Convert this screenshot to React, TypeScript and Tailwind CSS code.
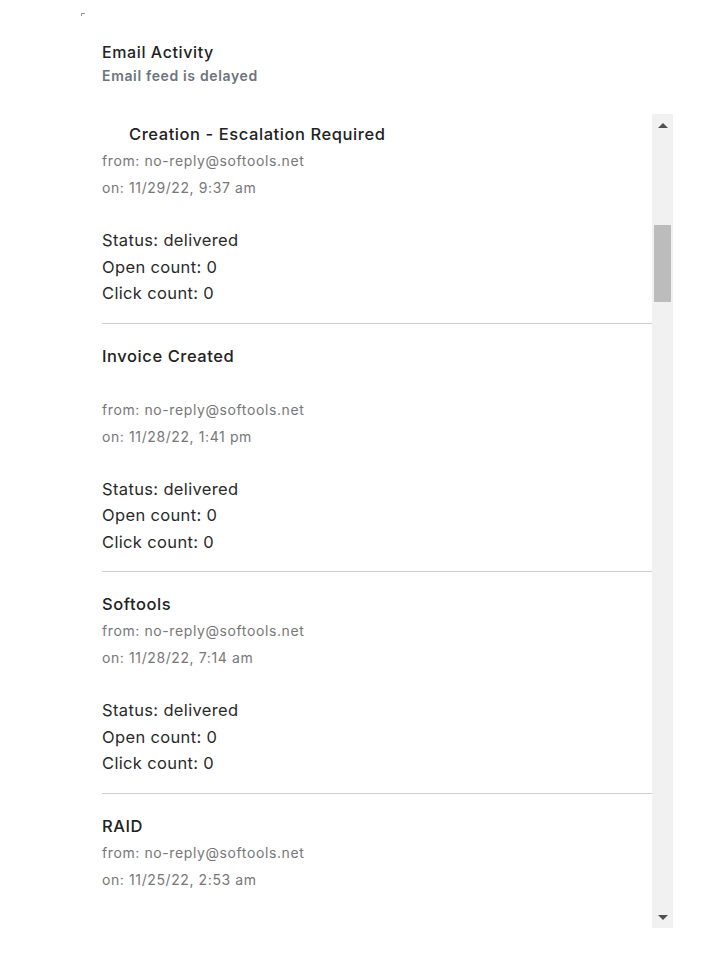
import React from 'react';

interface Email {
  subject: string;
  from: string;
  on: string;
  status: string;
  opens: number;
  clicks: number;
  indent?: boolean;
  blankAfterSubject?: boolean;
}

const emails: Email[] = [
  { subject: 'Creation - Escalation Required', from: 'no-reply@softools.net', on: '11/29/22, 9:37 am', status: 'delivered', opens: 0, clicks: 0, indent: true },
  { subject: 'Invoice Created', from: 'no-reply@softools.net', on: '11/28/22, 1:41 pm', status: 'delivered', opens: 0, clicks: 0, blankAfterSubject: true },
  { subject: 'Softools', from: 'no-reply@softools.net', on: '11/28/22, 7:14 am', status: 'delivered', opens: 0, clicks: 0 },
  { subject: 'RAID', from: 'no-reply@softools.net', on: '11/25/22, 2:53 am', status: 'delivered', opens: 0, clicks: 0 },
];

const EmailItem: React.FC<{ email: Email; first?: boolean }> = ({ email, first }) => (
  <div className={`border-b border-[#cfcfcf] pb-[16px] ${first ? 'pt-[7px]' : 'pt-[19px]'}`}>
    <div className={`text-[16.5px] leading-[26px] font-medium tracking-[0.57px] text-[#222] ${email.indent ? 'pl-[27px]' : ''}`}>
      {email.subject}
    </div>
    {email.blankAfterSubject && <div className="h-[27px]" />}
    <div className="text-[14px] leading-[27px] tracking-[0.6px] text-[#777]">
      <div>from: {email.from}</div>
      <div>on: {email.on}</div>
    </div>
    <div className="mt-[26px] text-[16.5px] leading-[26.5px] tracking-[0.35px] text-[#2a2a2a]">
      <div>Status: {email.status}</div>
      <div>Open count: {email.opens}</div>
      <div>Click count: {email.clicks}</div>
    </div>
  </div>
);

const ScrollBar: React.FC = () => (
  <div className="w-[21px] shrink-0 bg-[#f1f1f1] flex flex-col items-center">
    <div className="h-[22px] w-full flex items-center justify-center">
      <div className="w-0 h-0 border-l-[5px] border-r-[5px] border-b-[5px] border-l-transparent border-r-transparent border-b-[#505050]" />
    </div>
    <div className="mt-[89px] h-[77px] w-[17px] bg-[#bcbcbc]" />
    <div className="flex-1" />
    <div className="h-[22px] w-full flex items-center justify-center">
      <div className="w-0 h-0 border-l-[5px] border-r-[5px] border-t-[5px] border-l-transparent border-r-transparent border-t-[#505050]" />
    </div>
  </div>
);

export default function App() {
  return (
    <div className="relative min-h-[960px] bg-white pl-[102px] pt-[41px]" style={{ fontFamily: 'Inter, "Noto Sans", sans-serif' }}>
      {/* stray resize corner mark */}
      <div className="absolute left-[81px] top-[13px] w-[4px] h-[3px] border-t border-l border-[#9a9a9a]" />

      <div className="text-[16px] leading-[23px] font-medium tracking-[0.6px] text-[#222]">Email Activity</div>
      <div className="text-[14px] leading-[23px] font-semibold tracking-[0.65px] text-[#6c757d]">Email feed is delayed</div>

      <div className="mt-[27px] flex w-[571px] h-[814px]">
        <div className="flex-1 h-[811px] overflow-hidden">
          {emails.map((e, i) => (
            <EmailItem key={i} email={e} first={i === 0} />
          ))}
        </div>
        <ScrollBar />
      </div>
    </div>
  );
}
